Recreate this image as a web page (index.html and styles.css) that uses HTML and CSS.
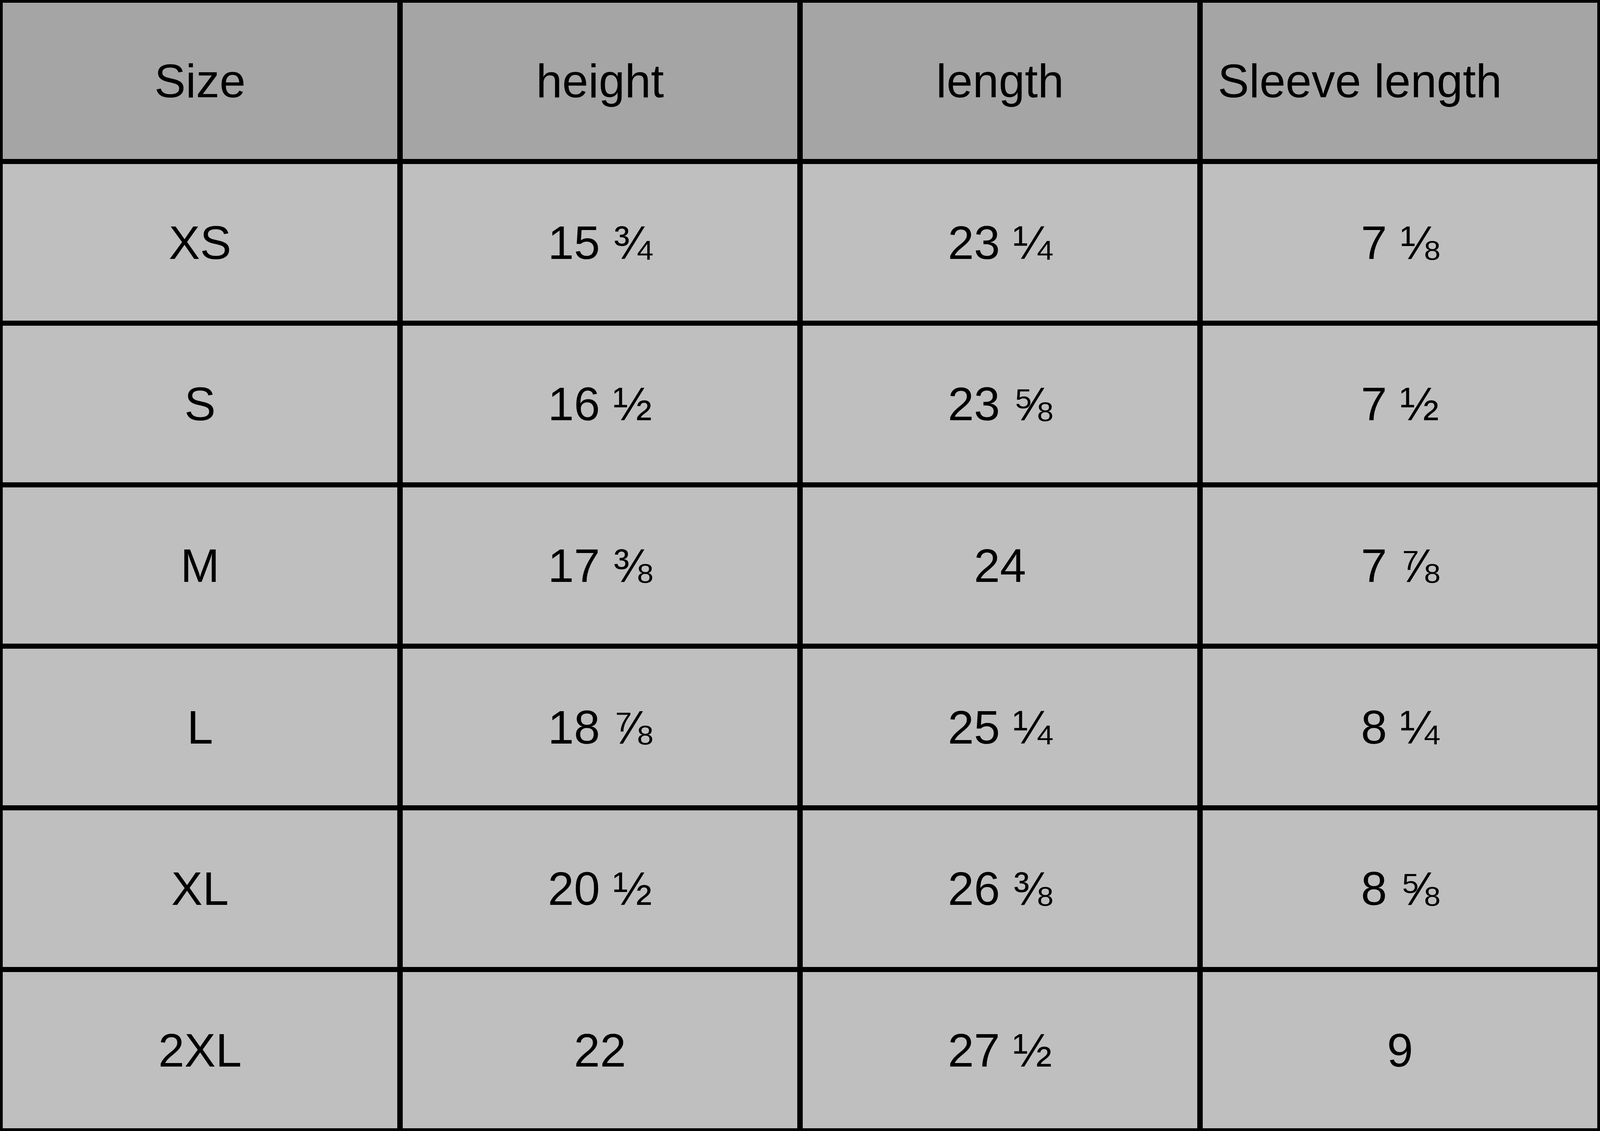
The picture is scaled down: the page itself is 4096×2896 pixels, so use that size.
FILE: index.html
```html
<!DOCTYPE html>
<html lang="en">
<head>
<meta charset="utf-8">
<title>Size chart</title>
<link rel="stylesheet" href="styles.css">
</head>
<body>
<div class="chart" role="table">
  <div class="cell head">Size</div>
  <div class="cell head">height</div>
  <div class="cell head">length</div>
  <div class="cell head left">Sleeve length</div>

  <div class="cell">XS</div>
  <div class="cell">15 ¾</div>
  <div class="cell">23 ¼</div>
  <div class="cell">7 ⅛</div>

  <div class="cell">S</div>
  <div class="cell">16 ½</div>
  <div class="cell">23 ⅝</div>
  <div class="cell">7 ½</div>

  <div class="cell">M</div>
  <div class="cell">17 ⅜</div>
  <div class="cell">24</div>
  <div class="cell">7 ⅞</div>

  <div class="cell">L</div>
  <div class="cell">18 ⅞</div>
  <div class="cell">25 ¼</div>
  <div class="cell">8 ¼</div>

  <div class="cell">XL</div>
  <div class="cell">20 ½</div>
  <div class="cell">26 ⅜</div>
  <div class="cell">8 ⅝</div>

  <div class="cell">2XL</div>
  <div class="cell">22</div>
  <div class="cell">27 ½</div>
  <div class="cell">9</div>
</div>
</body>
</html>
```
FILE: styles.css
```css
html, body {
  margin: 0;
  padding: 0;
  width: 4096px;
  height: 2896px;
  overflow: hidden;
  background: #000;
}

.chart {
  box-sizing: border-box;
  width: 4096px;
  height: 2896px;
  padding: 6.6px;
  display: grid;
  grid-template-columns: repeat(4, 1fr);
  grid-template-rows: repeat(7, 1fr);
  gap: 13.2px;
  background: #000;
  font-family: "Liberation Sans", Arial, Helvetica, sans-serif;
  font-size: 120px;
  color: #000;
}

.cell {
  display: flex;
  align-items: center;
  justify-content: center;
  background: #bfbfbf;
  line-height: 1;
  white-space: nowrap;
}

.head {
  background: #a5a5a5;
}

.left {
  justify-content: flex-start;
  padding-left: 39px;
}
```
